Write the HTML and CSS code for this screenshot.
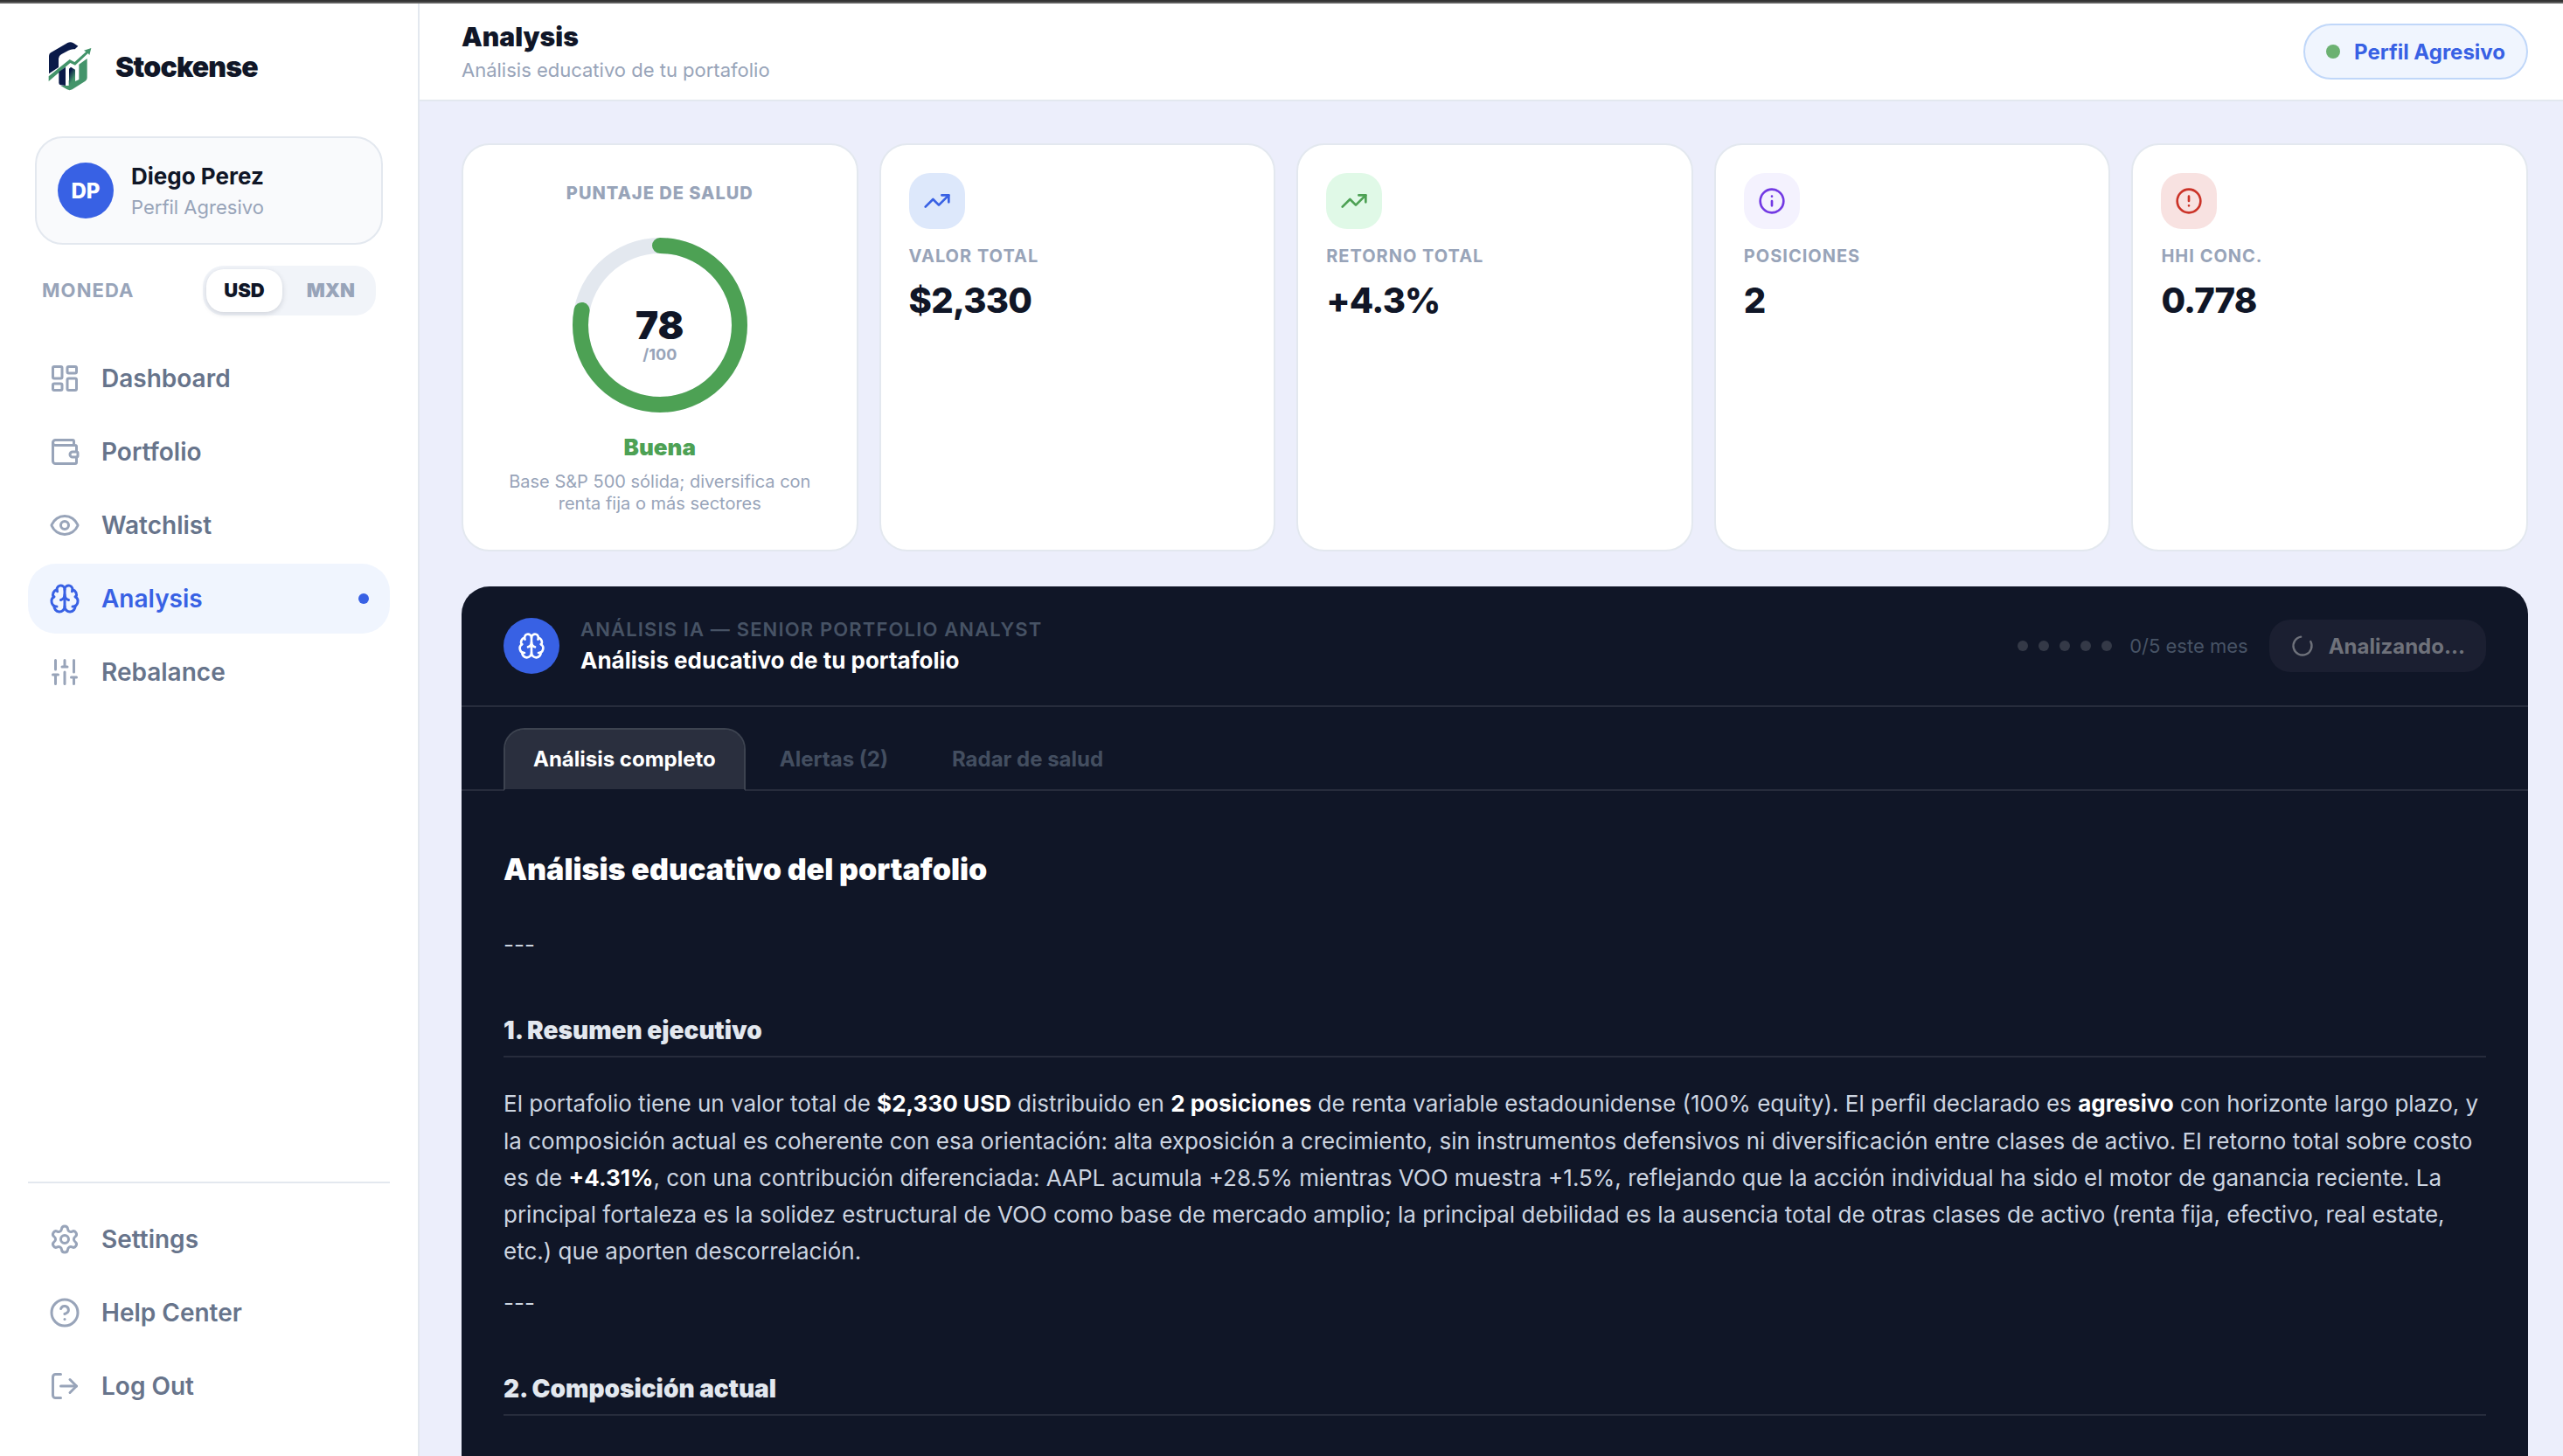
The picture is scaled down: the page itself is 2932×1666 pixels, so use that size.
FILE: index.html
```html
<!DOCTYPE html>
<html lang="es">
<head>
<meta charset="utf-8">
<title>Stockense</title>
<link rel="stylesheet" href="styles.css">
</head>
<body>
<svg class="sprite" aria-hidden="true">
  <symbol id="dashboard" viewBox="0 0 24 24"><rect width="7" height="9" x="3" y="3" rx="1"/><rect width="7" height="5" x="14" y="3" rx="1"/><rect width="7" height="9" x="14" y="12" rx="1"/><rect width="7" height="5" x="3" y="16" rx="1"/></symbol>
  <symbol id="wallet" viewBox="0 0 24 24"><path d="M19 7V4a1 1 0 0 0-1-1H5a2 2 0 0 0 0 4h15a1 1 0 0 1 1 1v4h-3a2 2 0 0 0 0 4h3a1 1 0 0 0 1-1v-2a1 1 0 0 0-1-1"/><path d="M3 5v14a2 2 0 0 0 2 2h15a1 1 0 0 0 1-1v-4"/></symbol>
  <symbol id="eye" viewBox="0 0 24 24"><path d="M2.062 12.348a1 1 0 0 1 0-.696 10.75 10.75 0 0 1 19.876 0 1 1 0 0 1 0 .696 10.75 10.75 0 0 1-19.876 0"/><circle cx="12" cy="12" r="3"/></symbol>
  <symbol id="brain" viewBox="0 0 24 24"><path d="M12 18V5"/><path d="M15 13a4.17 4.17 0 0 1-3-4 4.17 4.17 0 0 1-3 4"/><path d="M17.598 6.5A3 3 0 1 0 12 5a3 3 0 1 0-5.598 1.5"/><path d="M17.997 5.125a4 4 0 0 1 2.526 5.77"/><path d="M18 18a4 4 0 0 0 2-7.464"/><path d="M19.967 17.483A4 4 0 1 1 12 18a4 4 0 1 1-7.967-.517"/><path d="M6 18a4 4 0 0 1-2-7.464"/><path d="M6.003 5.125a4 4 0 0 0-2.526 5.77"/></symbol>
  <symbol id="sliders" viewBox="0 0 24 24"><path d="M10 8h4M12 21v-9M12 8V3M17 16h4M19 12V3M19 21v-5M3 14h4M5 10V3M5 21v-7"/></symbol>
  <symbol id="settings" viewBox="0 0 24 24"><path d="M9.671 4.136a2.34 2.34 0 0 1 4.659 0 2.34 2.34 0 0 0 3.319 1.915 2.34 2.34 0 0 1 2.33 4.033 2.34 2.34 0 0 0 0 3.831 2.34 2.34 0 0 1-2.33 4.033 2.34 2.34 0 0 0-3.319 1.915 2.34 2.34 0 0 1-4.659 0 2.34 2.34 0 0 0-3.32-1.915 2.34 2.34 0 0 1-2.33-4.033 2.34 2.34 0 0 0 0-3.831A2.34 2.34 0 0 1 6.35 6.051a2.34 2.34 0 0 0 3.319-1.915"/><circle cx="12" cy="12" r="3"/></symbol>
  <symbol id="help" viewBox="0 0 24 24"><circle cx="12" cy="12" r="10"/><path d="M9.09 9a3 3 0 0 1 5.83 1c0 2-3 3-3 3"/><path d="M12 17h.01"/></symbol>
  <symbol id="logout" viewBox="0 0 24 24"><path d="m16 17 5-5-5-5"/><path d="M21 12H9"/><path d="M9 21H5a2 2 0 0 1-2-2V5a2 2 0 0 1 2-2h4"/></symbol>
  <symbol id="trending" viewBox="0 0 24 24"><path d="M16 7h6v6"/><path d="m22 7-8.5 8.5-5-5L2 17"/></symbol>
  <symbol id="info" viewBox="0 0 24 24"><circle cx="12" cy="12" r="10"/><path d="M12 16v-4M12 8h.01"/></symbol>
  <symbol id="alert" viewBox="0 0 24 24"><circle cx="12" cy="12" r="10"/><path d="M12 8v4M12 16h.01"/></symbol>
  <symbol id="loader" viewBox="0 0 24 24"><path d="M21 12a9 9 0 1 1-6.219-8.56"/></symbol>
</svg>

<div class="window-edge"></div>
<div class="app">
  <aside class="sidebar">
    <div class="brand">
      <svg class="brand-logo" viewBox="162 138 156 180">
        <defs><linearGradient id="bar" x1="0" y1="0" x2="0.5" y2="1"><stop offset="0.25" stop-color="#0a1a49"/><stop offset="0.8" stop-color="#43946a"/></linearGradient></defs>
        <path fill="#0a1a49" d="M168 253V192q0-7 6-11l58-34q10-5 20 1l16 10-11 11q-11-2-22 4l-25 14q-9 5-9 14v30z"/>
        <path fill="#43946a" d="M167 279v-17l72-58 17 9 39-35-7-5 25-8-6 24-5-6-44 41-17-8z"/>
        <path fill="#0a1a49" d="M202 247l23-17v64l-17-2q-6-2-6-8z"/>
        <path fill="#43946a" d="M271 221l28-20v66q0 7-6 11l-45 29q-9 5-18 0l-22-13h28v-18h22v3l13-6z"/>
        <path fill="url(#bar)" d="M237 236l6-6 15 9v40l-8 15h-13z"/>
      </svg>
      <span class="brand-name">Stockense</span>
    </div>
    <div class="user">
      <span class="avatar">DP</span>
      <div><div class="user-name">Diego Perez</div><div class="user-sub">Perfil Agresivo</div></div>
    </div>
    <div class="currency">
      <span class="currency-label">MONEDA</span>
      <div class="toggle"><span class="toggle-item on">USD</span><span class="toggle-item">MXN</span></div>
    </div>
    <nav class="nav">
      <a class="nav-item"><svg class="icon"><use href="#dashboard"/></svg><span>Dashboard</span></a>
      <a class="nav-item"><svg class="icon"><use href="#wallet"/></svg><span>Portfolio</span></a>
      <a class="nav-item"><svg class="icon"><use href="#eye"/></svg><span>Watchlist</span></a>
      <a class="nav-item active"><svg class="icon"><use href="#brain"/></svg><span>Analysis</span><i class="nav-dot"></i></a>
      <a class="nav-item"><svg class="icon"><use href="#sliders"/></svg><span>Rebalance</span></a>
    </nav>
    <nav class="nav nav-bottom">
      <a class="nav-item"><svg class="icon"><use href="#settings"/></svg><span>Settings</span></a>
      <a class="nav-item"><svg class="icon"><use href="#help"/></svg><span>Help Center</span></a>
      <a class="nav-item"><svg class="icon"><use href="#logout"/></svg><span>Log Out</span></a>
    </nav>
  </aside>

  <div class="main">
    <header class="topbar">
      <div><h1 class="page-title">Analysis</h1><p class="page-sub">Análisis educativo de tu portafolio</p></div>
      <div class="profile-pill"><i class="profile-dot"></i><span>Perfil Agresivo</span></div>
    </header>

    <div class="content">
      <section class="stats">
        <div class="card health">
          <div class="health-label">PUNTAJE DE SALUD</div>
          <div class="ring">
            <svg class="ring-svg" viewBox="0 0 200 200">
              <circle class="ring-track" cx="100" cy="100" r="91"/>
              <circle class="ring-value" cx="100" cy="100" r="91" pathLength="100" stroke-dasharray="78 100" transform="rotate(-90 100 100)"/>
            </svg>
            <div class="ring-text"><span class="score">78</span><span class="score-max">/100</span></div>
          </div>
          <div class="health-grade">Buena</div>
          <p class="health-desc">Base S&amp;P 500 sólida; diversifica con<br>renta fija o más sectores</p>
        </div>
        <div class="card stat"><span class="stat-icon blue"><svg class="icon"><use href="#trending"/></svg></span><div class="stat-label">VALOR TOTAL</div><div class="stat-value">$2,330</div></div>
        <div class="card stat"><span class="stat-icon green"><svg class="icon"><use href="#trending"/></svg></span><div class="stat-label">RETORNO TOTAL</div><div class="stat-value">+4.3%</div></div>
        <div class="card stat"><span class="stat-icon violet"><svg class="icon"><use href="#info"/></svg></span><div class="stat-label">POSICIONES</div><div class="stat-value">2</div></div>
        <div class="card stat"><span class="stat-icon red"><svg class="icon"><use href="#alert"/></svg></span><div class="stat-label">HHI CONC.</div><div class="stat-value">0.778</div></div>
      </section>

      <section class="panel">
        <header class="panel-head">
          <span class="panel-icon"><svg class="icon"><use href="#brain"/></svg></span>
          <div class="panel-titles"><div class="panel-label">ANÁLISIS IA — SENIOR PORTFOLIO ANALYST</div><div class="panel-title">Análisis educativo de tu portafolio</div></div>
          <div class="quota-dots"><i></i><i></i><i></i><i></i><i></i></div>
          <span class="quota">0/5 este mes</span>
          <button class="analyze"><svg class="icon spinner"><use href="#loader"/></svg><span>Analizando...</span></button>
        </header>
        <div class="tabs">
          <span class="tab on">Análisis completo</span><span class="tab">Alertas (2)</span><span class="tab">Radar de salud</span>
        </div>
        <article class="report">
          <h2 class="report-title">Análisis educativo del portafolio</h2>
          <p>---</p>
          <h3>1. Resumen ejecutivo</h3>
          <p>El portafolio tiene un valor total de <strong>$2,330 USD</strong> distribuido en <strong>2 posiciones</strong> de renta variable estadounidense (100% equity). El perfil declarado es <strong>agresivo</strong> con horizonte largo plazo, y la composición actual es coherente con esa orientación: alta exposición a crecimiento, sin instrumentos defensivos ni diversificación entre clases de activo. El retorno total sobre costo es de <strong>+4.31%</strong>, con una contribución diferenciada: AAPL acumula +28.5% mientras VOO muestra +1.5%, reflejando que la acción individual ha sido el motor de ganancia reciente. La principal fortaleza es la solidez estructural de VOO como base de mercado amplio; la principal debilidad es la ausencia total de otras clases de activo (renta fija, efectivo, real estate, etc.) que aporten descorrelación.</p>
          <p>---</p>
          <h3>2. Composición actual</h3>
        </article>
      </section>
    </div>
  </div>
</div>
</body>
</html>
```
FILE: styles.css
```css
* { box-sizing: border-box; margin: 0; padding: 0; }

body {
  height: 1666px;
  overflow: hidden;
  display: flex;
  flex-direction: column;
  font-family: Inter, "Liberation Sans", sans-serif;
  color: #101627;
  background: #eceefb;
}

.sprite { display: none; }

.icon {
  display: block;
  flex: none;
  width: 32px;
  height: 32px;
  fill: none;
  stroke: currentColor;
  stroke-width: 2;
  stroke-linecap: round;
  stroke-linejoin: round;
}

.window-edge { flex: none; height: 4px; background: #333; border-bottom: 2px solid #5c5c5c; }

.app { flex: 1; min-height: 0; display: flex; }

/* Sidebar */
.sidebar {
  flex: none;
  width: 480px;
  display: flex;
  flex-direction: column;
  padding: 40px 32px 40px;
  background: #fff;
  border-right: 2px solid #e3e8ef;
}

.brand { display: flex; align-items: center; gap: 26px; height: 64px; padding-left: 22px; }
.brand-logo { width: 52px; height: 60px; }
.brand-name { font-size: 32px; font-weight: 900; letter-spacing: -0.025em; }

.user {
  display: flex;
  align-items: center;
  gap: 20px;
  height: 124px;
  margin: 48px 8px 0;
  padding: 2px 24px 0;
  background: #f9fafc;
  border: 2px solid #e3e8ef;
  border-radius: 32px;
}
.avatar {
  display: grid;
  place-items: center;
  width: 64px;
  height: 64px;
  margin-top: -2px;
  border-radius: 50%;
  background: #3861e4;
  color: #fff;
  font-size: 24px;
  font-weight: 800;
}
.user-name { font-size: 26px; line-height: 36px; font-weight: 700; }
.user-sub { font-size: 22px; line-height: 34px; color: #98a4b9; }

.currency { display: flex; align-items: center; justify-content: space-between; margin-top: 24px; padding: 0 16px; }
.currency-label { padding-bottom: 2px; font-size: 22px; font-weight: 700; letter-spacing: 0.05em; color: #98a4b9; }
.toggle { display: flex; gap: 8px; padding: 4px; border-radius: 24px; background: #f1f4f9; }
.toggle-item { padding: 0 20px; font-size: 22px; line-height: 49px; font-weight: 900; color: #98a4b9; }
.toggle-item.on { border-radius: 20px; background: #fff; color: #101627; box-shadow: 0 2px 6px rgba(16, 22, 39, 0.15); }

.nav { display: flex; flex-direction: column; gap: 4px; margin-top: 32px; }
.nav-item {
  display: flex;
  align-items: center;
  gap: 24px;
  height: 80px;
  padding: 0 24px;
  border-radius: 32px;
  font-size: 28px;
  font-weight: 600;
  color: #67748b;
}
.nav-item .icon { width: 36px; height: 36px; color: #98a4b9; }
.nav-item.active { background: #f0f5fe; color: #3861e4; }
.nav-item.active .icon { color: #3861e4; }
.nav-dot { width: 12px; height: 12px; margin-left: auto; border-radius: 50%; background: #3861e4; }
.nav-bottom { margin-top: auto; padding-top: 24px; border-top: 2px solid #e3e8ef; }

/* Main column */
.main { flex: 1; min-width: 0; display: flex; flex-direction: column; }

.topbar {
  flex: none;
  display: flex;
  align-items: center;
  justify-content: space-between;
  height: 112px;
  padding: 0 40px 0 48px;
  background: #fff;
  border-bottom: 2px solid #e3e8ef;
}
.page-title { font-size: 30px; line-height: 42px; font-weight: 900; }
.page-sub { font-size: 22px; line-height: 34px; color: #98a4b9; }
.profile-pill {
  display: flex;
  align-items: center;
  gap: 16px;
  height: 64px;
  padding: 0 24px;
  border: 2px solid #c0d7f9;
  border-radius: 32px;
  background: #f0f5fe;
  color: #3861e4;
  font-size: 24px;
  font-weight: 700;
}
.profile-dot { width: 16px; height: 16px; border-radius: 50%; background: #6cb172; }

.content { flex: 1; min-height: 0; padding: 48px 40px 0 48px; display: flex; flex-direction: column; gap: 40px; }

.stats { flex: none; height: 467px; display: grid; grid-template-columns: repeat(5, 1fr); gap: 24px; }
.card { background: #fff; border: 2px solid #e3e8ef; border-radius: 32px; padding: 32px; }

.health { display: flex; flex-direction: column; align-items: center; padding: 40px 32px; text-align: center; }
.health-label { font-size: 20px; line-height: 30px; font-weight: 800; letter-spacing: 0.05em; color: #98a4b9; }
.ring { position: relative; margin-top: 36px; width: 200px; height: 200px; }
.ring-svg { display: block; width: 200px; height: 200px; fill: none; stroke-width: 18; }
.ring-track { stroke: #e3e8ef; }
.ring-value { stroke: #4da154; stroke-linecap: round; }
.ring-text { position: absolute; inset: 24px 0 0; display: flex; flex-direction: column; align-items: center; justify-content: center; }
.score { font-size: 44px; line-height: 44px; font-weight: 900; }
.score-max { font-size: 18px; line-height: 24px; font-weight: 700; color: #98a4b9; }
.health-grade { margin-top: 20px; font-size: 26px; line-height: 40px; font-weight: 900; color: #4da154; }
.health-desc { margin-top: 7px; font-size: 20px; line-height: 25px; color: #98a4b9; }

.stat-icon { display: grid; place-items: center; width: 64px; height: 64px; border-radius: 24px; }
.blue { background: #dde8fb; color: #3861e4; }
.green { background: #e0f9e7; color: #4da154; }
.violet { background: #f4f2fe; color: #7239e3; }
.red { background: #f8e2e1; color: #cb3328; }
.stat-label { margin-top: 16px; font-size: 20px; line-height: 30px; font-weight: 700; letter-spacing: 0.05em; color: #98a4b9; }
.stat-value { margin-top: 11px; font-size: 40px; line-height: 50px; font-weight: 800; letter-spacing: -0.02em; }

/* Analysis panel */
.panel { flex: 1; min-height: 0; overflow: hidden; border-radius: 32px 32px 0 0; background: #101627; color: #fff; }
.panel-head { display: flex; align-items: center; height: 138px; padding: 0 48px; border-bottom: 2px solid #272c3c; }
.panel-icon { display: grid; place-items: center; width: 64px; height: 64px; margin-right: 24px; border-radius: 50%; background: #3861e4; }
.panel-titles { margin-right: auto; }
.panel-label { font-size: 22px; line-height: 34px; font-weight: 600; letter-spacing: 0.052em; color: #475365; }
.panel-title { font-size: 26px; line-height: 38px; font-weight: 700; }
.quota-dots { display: flex; gap: 12px; margin-right: 20px; }
.quota-dots i { width: 12px; height: 12px; border-radius: 50%; background: #343947; }
.quota { margin-right: 24px; font-size: 22px; color: #475365; }
.analyze {
  display: flex;
  align-items: center;
  gap: 16px;
  height: 60px;
  padding: 0 24px;
  border: 0;
  border-radius: 24px;
  background: #1b1f31;
  color: #6f727b;
  font: 700 24px Inter, "Liberation Sans", sans-serif;
}
.spinner { width: 28px; height: 28px; transform: rotate(-28deg); }

.tabs { display: flex; gap: 5px; padding: 24px 48px 0; border-bottom: 2px solid #272c3c; }
.tab {
  height: 72px;
  margin-bottom: -2px;
  padding: 0 32px;
  border: 2px solid transparent;
  border-radius: 24px 24px 0 0;
  font-size: 24px;
  line-height: 68px;
  font-weight: 700;
  color: #434e60;
}
.tab.on { background: #2a2f3e; background-clip: padding-box; border-color: #3d4350; border-bottom-color: #101627; color: #fff; }

.report { padding: 70px 48px 0; font-size: 26px; line-height: 42.25px; color: #ccd4e0; }
.report-title { margin-bottom: 45px; font-size: 34px; line-height: 40px; font-weight: 900; color: #fff; }
.report h3 { margin: 58px 0 32px; padding-bottom: 9px; border-bottom: 2px solid #272c3c; font-size: 28px; line-height: 39px; font-weight: 900; color: #e3e8ef; }
.report p + p { margin-top: 16px; }
.report strong { font-weight: 700; color: #fff; }
```
